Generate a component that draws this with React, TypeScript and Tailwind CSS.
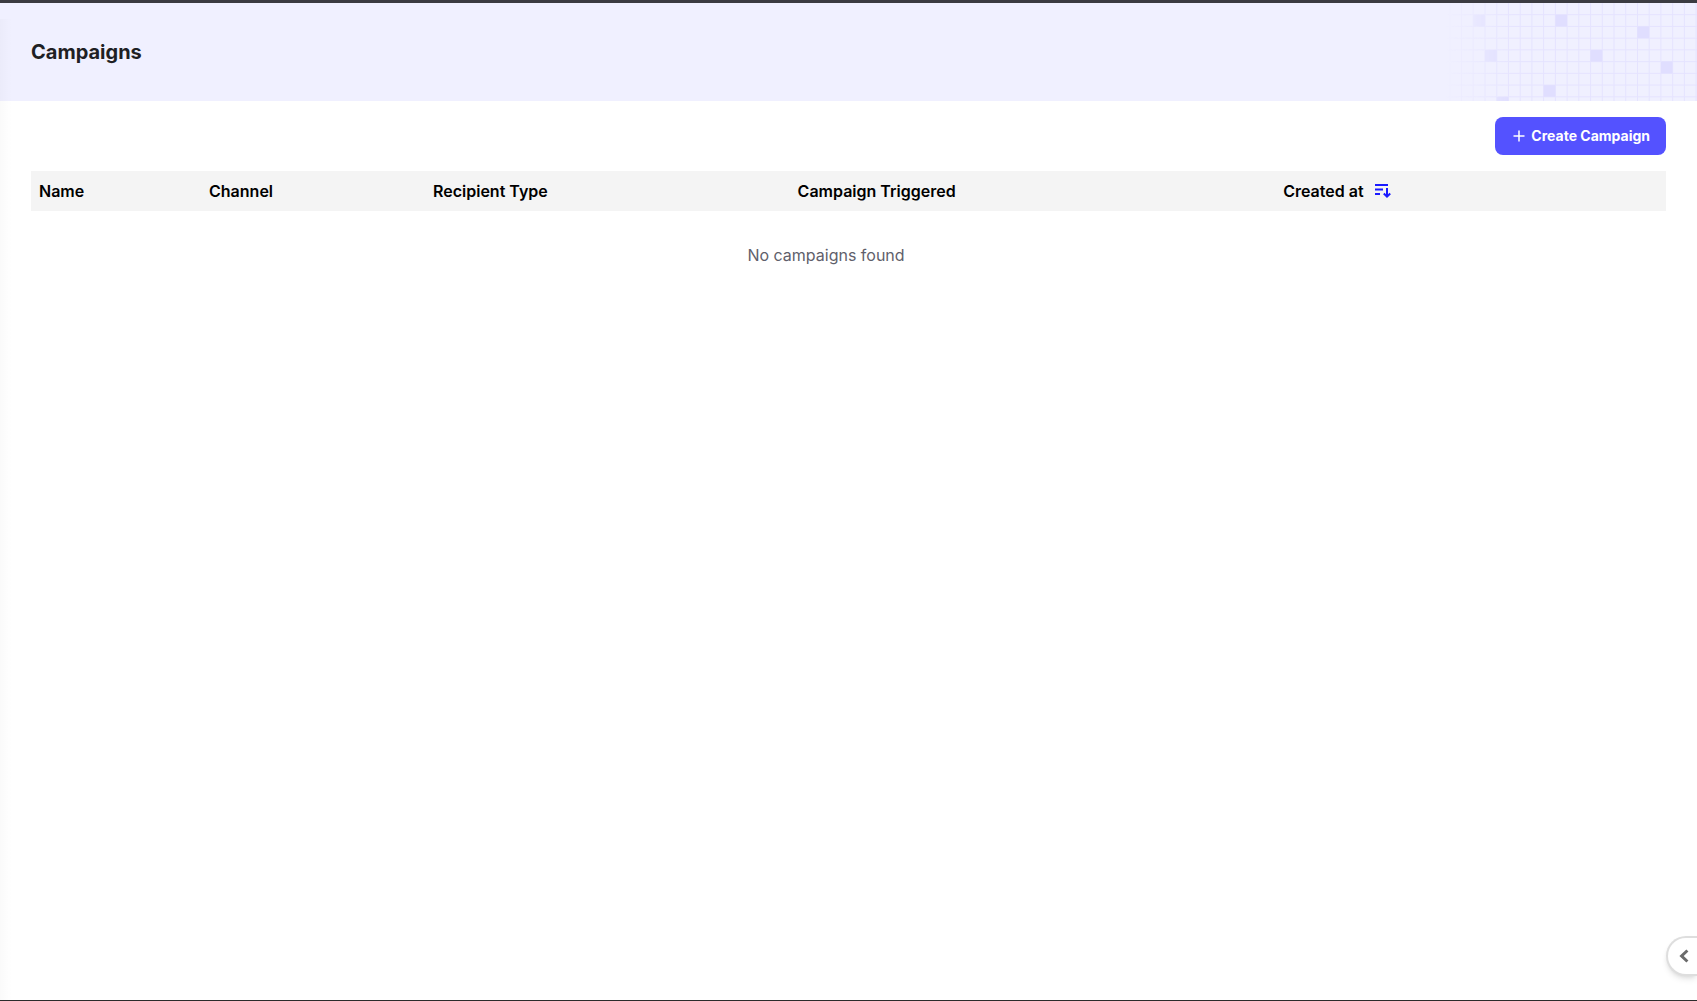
const columns = [
  { key: 'name', label: 'Name', className: 'w-[10.4%]' },
  { key: 'channel', label: 'Channel', className: 'w-[13.7%]' },
  { key: 'recipient', label: 'Recipient Type', className: 'w-[22.3%]' },
  { key: 'triggered', label: 'Campaign Triggered', className: 'w-[29.7%]' },
  { key: 'created', label: 'Created at', className: '', sorted: true },
];

// filled cells of the header grid, as [column, row]
const cells = [
  [2, 1],
  [9, 1],
  [16, 2],
  [3, 4],
  [12, 4],
  [18, 5],
  [8, 7],
  [4, 8],
];

const PITCH = 11.73;

function GridPattern() {
  return (
    <svg width="257" height="98" viewBox="0 0 257 98" aria-hidden="true">
      <defs>
        <linearGradient id="grid-fade" x1="0" x2="1" y1="0" y2="0">
          <stop offset="0.02" stopColor="#fff" stopOpacity="0" />
          <stop offset="0.28" stopColor="#fff" stopOpacity="1" />
        </linearGradient>
        <mask id="grid-mask">
          <rect width="257" height="98" fill="url(#grid-fade)" />
        </mask>
      </defs>
      <g mask="url(#grid-mask)">
        {Array.from({ length: 22 }, (_, i) => (
          <path key={`v${i}`} d={`M${9.8 + i * PITCH} 0V98`} stroke="#e5e3ff" />
        ))}
        {Array.from({ length: 8 }, (_, i) => (
          <path key={`h${i}`} d={`M0 ${11.7 + i * PITCH}H257`} stroke="#e5e3ff" />
        ))}
        {cells.map(([col, row]) => (
          <rect
            key={`${col}-${row}`}
            x={9.8 + col * PITCH}
            y={row * PITCH}
            width={PITCH}
            height={PITCH}
            fill="#e0deff"
          />
        ))}
      </g>
    </svg>
  );
}

function SortIcon() {
  return (
    <svg width="18" height="18" viewBox="0 0 18 18" fill="none" stroke="#1a1aff" strokeWidth="2" aria-hidden="true">
      <path d="M1 3h13M1 7.5h8M1 12h5M13 6v9M9.8 11.5l3.2 3.2 3.2-3.2" />
    </svg>
  );
}

function PlusIcon() {
  return (
    <svg width="12" height="12" viewBox="0 0 12 12" fill="none" stroke="currentColor" strokeWidth="1.5" aria-hidden="true">
      <path d="M6 0.5v11M0.5 6h11" />
    </svg>
  );
}

function ChevronIcon() {
  return (
    <svg width="10" height="14" viewBox="0 0 10 14" fill="none" stroke="currentColor" strokeWidth="3" aria-hidden="true">
      <path d="M8.4 1.5L2.6 7l5.8 5.5" />
    </svg>
  );
}

function PageHeader() {
  return (
    <header className="flex h-[98px] items-center justify-between bg-[#f0f0ff] pl-[31px]">
      <h1 className="text-xl font-bold text-[#1f1f24]">Campaigns</h1>
      <GridPattern />
    </header>
  );
}

function CampaignsTable() {
  return (
    <table className="w-full table-fixed text-left">
      <thead className="bg-[#f4f4f4]">
        <tr className="h-10">
          {columns.map((column) => (
            <th key={column.key} scope="col" className={`px-2 font-semibold text-black ${column.className}`}>
              {column.sorted ? (
                <button type="button" className="flex items-center gap-2.5">
                  {column.label}
                  <SortIcon />
                </button>
              ) : (
                column.label
              )}
            </th>
          ))}
          <td className="w-[45px]" />
        </tr>
      </thead>
      <tbody>
        <tr>
          <td colSpan={5} className="py-8 text-center text-[#5f5f6b]">
            No campaigns found
          </td>
          <td />
        </tr>
      </tbody>
    </table>
  );
}

export default function App() {
  return (
    <div className="relative flex min-h-screen flex-col overflow-hidden border-t-3 border-b border-t-[#3b3b41] border-b-[#2b2b2b] bg-white font-['Inter',sans-serif] text-base">
      <PageHeader />
      <main className="flex-1 px-[31px] pt-4">
        <div className="mb-4 flex justify-end">
          <button
            type="button"
            className="flex h-[38px] items-center gap-1.5 rounded-lg bg-[#5452ff] pr-4 pl-[18px] text-sm font-bold text-white"
          >
            <PlusIcon />
            Create Campaign
          </button>
        </div>
        <CampaignsTable />
      </main>
      <div className="pointer-events-none absolute top-4 bottom-0 left-0 w-3 bg-linear-to-r from-black/2 to-transparent" />
      <button
        type="button"
        aria-label="Open panel"
        className="absolute right-0 bottom-6 flex h-10 w-[31px] items-center justify-end rounded-l-full border-2 border-r-0 border-[#dedede] bg-white pr-2 text-[#6b6b6b] shadow-md"
      >
        <ChevronIcon />
      </button>
    </div>
  );
}
